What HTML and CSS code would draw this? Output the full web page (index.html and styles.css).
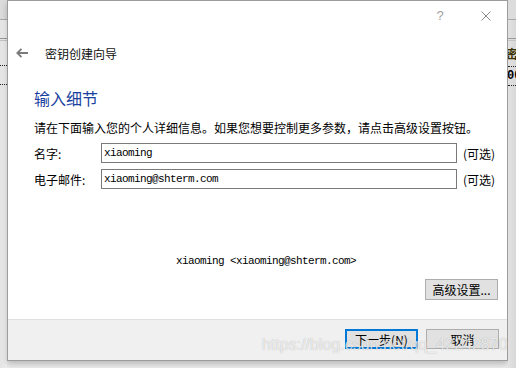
FILE: index.html
```html
<!DOCTYPE html>
<html lang="zh-CN">
<head>
<meta charset="UTF-8">
<title>密钥创建向导</title>
<link rel="stylesheet" href="styles.css">
</head>
<body>
    <div class="screen">
        <div class="side side-left">
            <div class="side-top"></div>
            <div class="side-rule"></div>
            <div class="side-gap"></div>
            <div class="side-dots"></div>
            <div class="side-gap2"></div>
            <div class="side-dots"></div>
        </div>

        <div class="dialog">
            <div class="titlebar">
                <span class="help">?</span>
                <svg class="close" width="10" height="10" viewBox="0 0 10 10">
                    <path d="M0.5 0.5 L9.5 9.5 M9.5 0.5 L0.5 9.5" stroke="#8a8a8a" stroke-width="1" fill="none"/>
                </svg>
            </div>
            <div class="wizard-nav">
                <svg class="back" width="12" height="10" viewBox="0 0 12 10">
                    <path d="M5.5 0.8 L1.3 5 L5.5 9.2 M1.3 5 H12" stroke="#7b7b7b" stroke-width="1.8" fill="none"/>
                </svg>
                <span class="wizard-title">密钥创建向导</span>
            </div>

            <div class="page">
                <h1>输入细节</h1>
                <p class="intro">请在下面输入您的个人详细信息。如果您想要控制更多参数，请点击高级设置按钮。</p>
                <div class="field-row">
                    <label>名字:</label>
                    <input type="text" value="xiaoming">
                    <span class="optional">(可选)</span>
                </div>
                <div class="field-row">
                    <label>电子邮件:</label>
                    <input type="text" value="xiaoming@shterm.com">
                    <span class="optional">(可选)</span>
                </div>
                <div class="preview">xiaoming &lt;xiaoming@shterm.com&gt;</div>
                <div class="advanced-row">
                    <button class="btn">高级设置...</button>
                </div>
            </div>

            <div class="footer">
                <button class="btn primary">下一步(N)</button>
                <button class="btn">取消</button>
            </div>
        </div>

        <div class="side side-right">
            <div class="side-top"></div>
            <div class="side-rule"></div>
            <div class="side-text">密</div>
            <div class="side-dots"></div>
            <div class="side-num">00</div>
            <div class="side-dots"></div>
        </div>

        <div class="watermark">https://blog.csdn.net/qq_42242870</div>
    </div>
</body>
</html>
```

FILE: styles.css
```css
body {
    margin: 0;
    background-color: #ececec;
    font-family: "Noto Sans CJK SC", "Liberation Sans", sans-serif;
    font-size: 12px;
    color: #000000;
}
.screen {
    position: relative;
    display: flex;
    align-items: flex-start;
    width: 516px;
    height: 368px;
    overflow: hidden;
}
.side {
    display: flex;
    flex-direction: column;
    height: 368px;
    overflow: hidden;
    background: linear-gradient(to right, #e4e4e4, #f0f0f0);
}
.side-left {
    width: 7px;
}
.side-right {
    width: 8px;
    background: linear-gradient(to right, #e2e2e2, #d8d8d8);
}
.side-top {
    height: 19px;
    background-color: #dcdcdc;
    border-bottom: 1px solid #a8a8a8;
}
.side-rule {
    height: 1px;
    margin-top: 18px;
    border-top: 1px solid #9a9a9a;
    border-bottom: 1px solid #c4c4c4;
}
.side-gap {
    height: 24px;
}
.side-gap2 {
    height: 18px;
}
.side-dots {
    height: 0;
    border-top: 1px dotted #222222;
}
.side-text {
    height: 25px;
    line-height: 25px;
    font-size: 12px;
    font-weight: bold;
    color: #3a3000;
    margin-left: -2px;
}
.side-num {
    height: 18px;
    line-height: 18px;
    font-family: "Liberation Mono", monospace;
    font-weight: bold;
    font-size: 12px;
    margin-left: -1px;
}
.dialog {
    display: flex;
    flex-direction: column;
    width: 501px;
    height: 361px;
    box-sizing: border-box;
    background-color: #ffffff;
    border: 1px solid #9c9c9c;
    box-shadow: 0 3px 6px rgba(0, 0, 0, 0.22);
}
.titlebar {
    display: flex;
    align-items: center;
    justify-content: flex-end;
    height: 29px;
    padding-right: 16px;
}
.help {
    width: 8px;
    margin-right: 37px;
    font-family: "Liberation Sans", sans-serif;
    font-size: 13px;
    color: #a0a0a0;
    text-align: center;
}
.wizard-nav {
    display: flex;
    align-items: center;
    height: 46px;
    padding-left: 8px;
}
.back {
    margin-right: 17px;
}
.wizard-title {
    font-size: 12px;
    color: #111111;
}
.page {
    flex: 1;
    display: flex;
    flex-direction: column;
    padding: 0 9px 0 26px;
}
h1 {
    margin: 11px 0 0 0;
    font-size: 16px;
    font-weight: normal;
    line-height: 22px;
    color: #1a3fa0;
}
.intro {
    margin: 10px 0 0 0;
    line-height: 18px;
}
.field-row {
    display: flex;
    align-items: center;
    height: 20px;
    margin-top: 6px;
}
.field-row label {
    width: 67px;
}
.field-row input {
    width: 356px;
    height: 20px;
    box-sizing: border-box;
    margin: 0;
    padding: 0 0 0 2px;
    border: 1px solid #7a7a7a;
    font-family: "Liberation Mono", monospace;
    font-size: 11px;
    letter-spacing: -0.6px;
    color: #000000;
    outline: none;
}
.optional {
    margin-left: 6px;
}
.preview {
    margin-top: 64px;
    line-height: 16px;
    text-align: center;
    font-family: "Liberation Mono", monospace;
    font-size: 11px;
    letter-spacing: -0.6px;
}
.advanced-row {
    display: flex;
    justify-content: flex-end;
    margin-top: 10px;
}
.btn {
    width: 73px;
    height: 21px;
    box-sizing: border-box;
    margin: 0;
    padding: 0;
    background-color: #e1e1e1;
    border: 1px solid #adadad;
    font-family: "Noto Sans CJK SC", "Liberation Sans", sans-serif;
    font-size: 12px;
    color: #000000;
}
.footer {
    display: flex;
    justify-content: flex-end;
    gap: 8px;
    height: 41px;
    box-sizing: border-box;
    padding: 9px 8px 0 0;
    background-color: #f0f0f0;
    border-top: 1px solid #dfdfdf;
}
.footer .btn {
    height: 20px;
}
.btn.primary {
    border: 2px solid #0078d7;
}
.watermark {
    position: absolute;
    left: 262px;
    top: 336px;
    font-family: "Liberation Sans", sans-serif;
    font-size: 16px;
    line-height: 18px;
    color: rgba(255, 255, 255, 0.75);
    text-shadow: 0 0 1px rgba(0, 0, 0, 0.3);
}
```
